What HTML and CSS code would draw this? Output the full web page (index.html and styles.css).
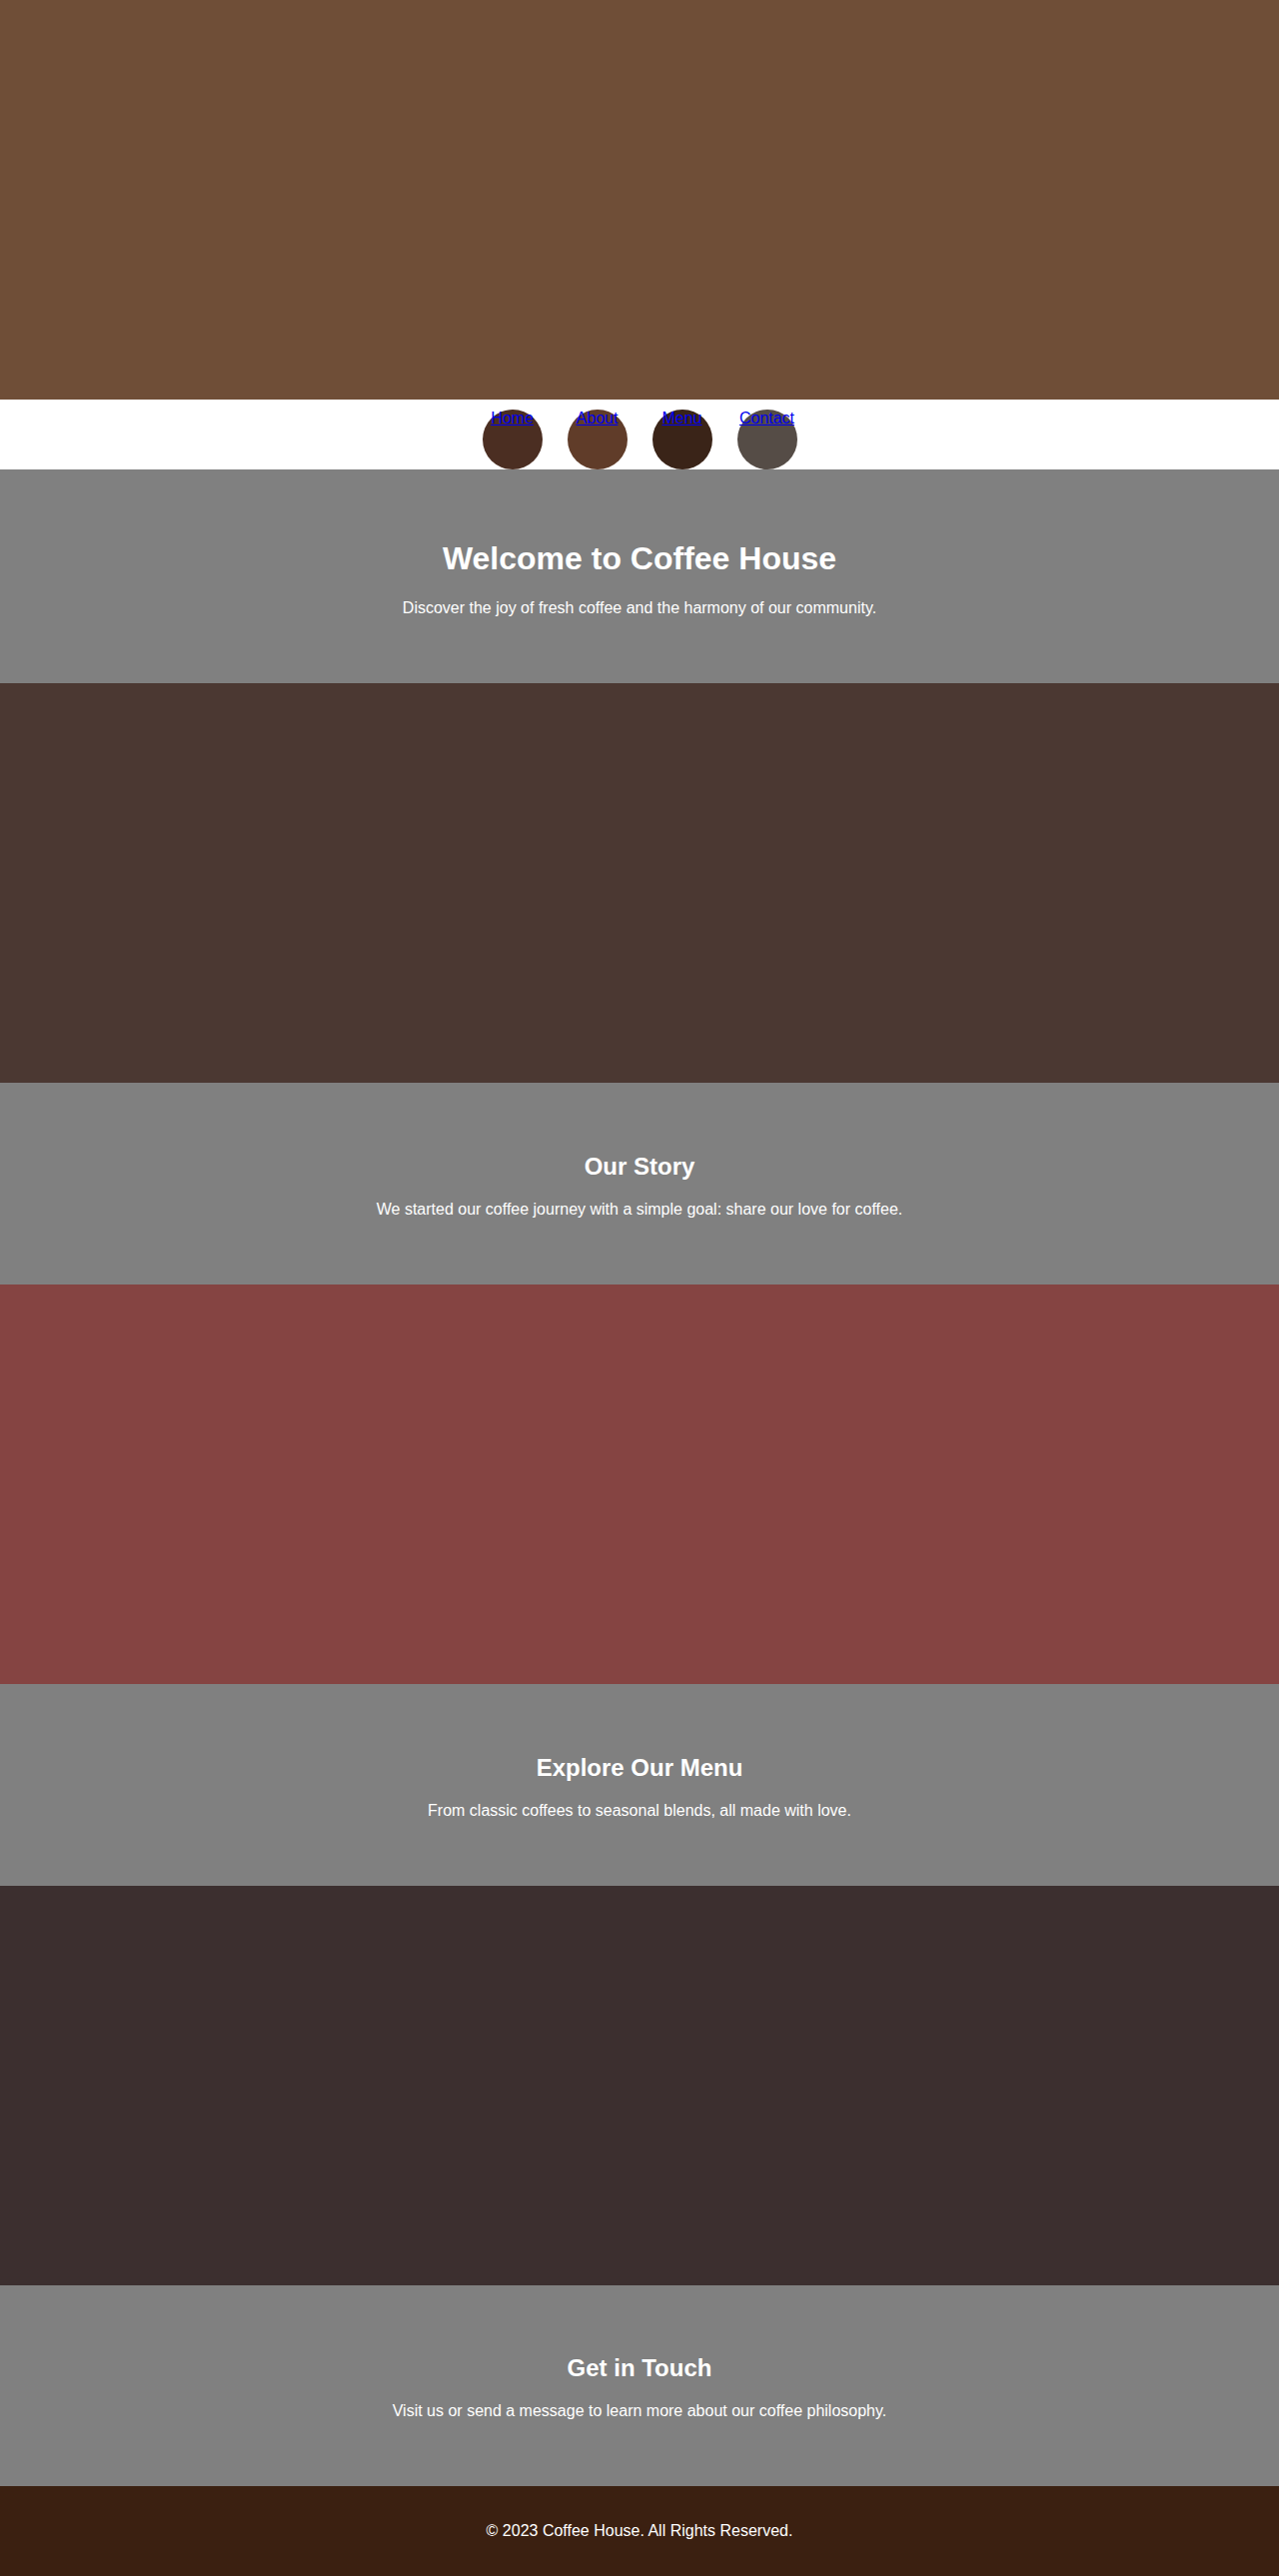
FILE: index.html
```html
<!DOCTYPE html>
<html lang="en">
<head>
<meta charset="UTF-8">
<title>Coffee House</title>
<link rel="stylesheet" href="styles.css">
</head>
<body>
  <header class="banner banner-header"></header>
  <nav class="main-nav">
    <ul class="nav-list">
      <li class="nav-item item-home"><a href="#home">Home</a></li>
      <li class="nav-item item-about"><a href="#about">About</a></li>
      <li class="nav-item item-menu"><a href="#menu">Menu</a></li>
      <li class="nav-item item-contact"><a href="#contact">Contact</a></li>
    </ul>
  </nav>
  <section class="content" id="home">
    <h1>Welcome to Coffee House</h1>
    <p>Discover the joy of fresh coffee and the harmony of our community.</p>
  </section>
  <div class="banner banner-story"></div>
  <section class="content" id="about">
    <h2>Our Story</h2>
    <p>We started our coffee journey with a simple goal: share our love for coffee.</p>
  </section>
  <div class="banner banner-menu"></div>
  <section class="content" id="menu">
    <h2>Explore Our Menu</h2>
    <p>From classic coffees to seasonal blends, all made with love.</p>
  </section>
  <div class="banner banner-contact"></div>
  <section class="content" id="contact">
    <h2>Get in Touch</h2>
    <p>Visit us or send a message to learn more about our coffee philosophy.</p>
  </section>
  <footer class="site-footer">
    <p>&copy; 2023 Coffee House. All Rights Reserved.</p>
  </footer>
</body>
</html>
```

FILE: styles.css
```css
body {
  margin: 0;
  font-family: "Liberation Sans", Arial, sans-serif;
}

.banner {
  height: 400px;
}

.banner-header { background-color: #6f4e37; }
.banner-story { background-color: #4b3832; }
.banner-menu { background-color: #854442; }
.banner-contact { background-color: #3c2f2f; }

.main-nav {
  background-color: #ffffff;
  padding-top: 10px;
}

.nav-list {
  list-style: none;
  margin: 0;
  padding: 0;
  display: flex;
  justify-content: center;
  gap: 25px;
}

.nav-item {
  width: 60px;
  height: 60px;
  border-radius: 50%;
  text-align: center;
}

.item-home { background-color: #4b2e22; }
.item-about { background-color: #603c29; }
.item-menu { background-color: #3a2418; }
.item-contact { background-color: #554c46; }

.nav-item a {
  color: #0000ee;
}

.content {
  background-color: #808080;
  color: #ffffff;
  text-align: center;
  padding: 50px 20px;
}

.site-footer {
  background-color: #3b2011;
  color: #ffffff;
  text-align: center;
  padding: 20px;
}
```
